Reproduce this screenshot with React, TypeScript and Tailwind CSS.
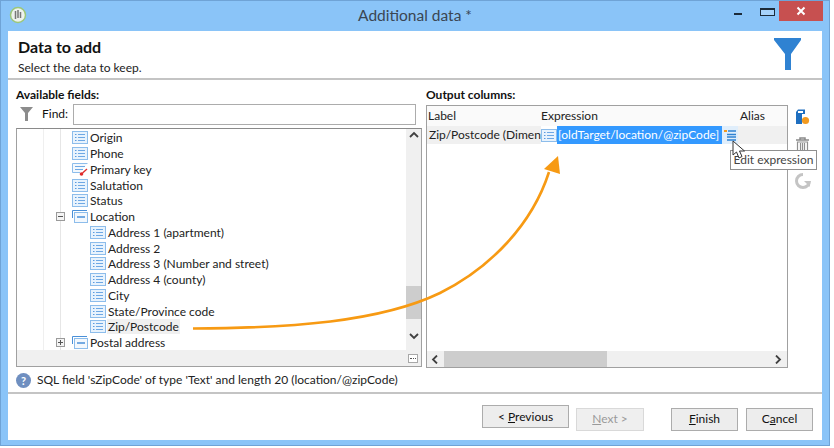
import React from "react";

const font = "[font-family:'Lato','Liberation_Sans',sans-serif]";

function FieldIcon() {
  return (
    <svg width="16" height="13" viewBox="0 0 16 13" className="shrink-0">
      <rect x="0.5" y="0.5" width="15" height="12" fill="#e8f3fd" stroke="#8dbdeb" />
      <path d="M3 3.5h1.5M3 6.5h1.5M3 9.5h1.5" stroke="#5a9be0" strokeWidth="1.2" />
      <path d="M6 3.5h7M6 6.5h7M6 9.5h7" stroke="#6ea8e4" strokeWidth="1.1" />
    </svg>
  );
}

function KeyIcon() {
  return (
    <svg width="16" height="13" viewBox="0 0 16 13" className="shrink-0">
      <path d="M15.5 0.5H0.5V9.5H8" fill="#f3f8fd" stroke="#8dbdeb" />
      <path d="M3 3.5h10M3 6.5h8" stroke="#6ea8e4" strokeWidth="1.1" />
      <circle cx="9.5" cy="11" r="1.8" fill="#e02a2a" />
      <path d="M10.5 10L15 6" stroke="#e02a2a" strokeWidth="1.4" />
    </svg>
  );
}

function GroupIcon() {
  return (
    <svg width="16" height="13" viewBox="0 0 16 13" className="shrink-0">
      <path d="M0.5 8V0.5H15" fill="none" stroke="#4a90d8" />
      <rect x="2.5" y="2.5" width="13" height="10" fill="#f3f8fd" stroke="#8dbdeb" />
      <path d="M5 7h8" stroke="#4a90d8" strokeWidth="1.5" />
    </svg>
  );
}

function Tree({ open }: { open: boolean }) {
  return (
    <span className="flex h-[9px] w-[9px] items-center justify-center border border-[#9a9a9a] bg-[#f4f4f4]">
      <svg width="7" height="7" viewBox="0 0 7 7">
        <path d={open ? "M1 3.5h5" : "M1 3.5h5M3.5 1v5"} stroke="#555" />
      </svg>
    </span>
  );
}

const rows: { label: string; level: number; kind: "field" | "key" | "group"; open?: boolean; sel?: boolean }[] = [
  { label: "Origin", level: 1, kind: "field" },
  { label: "Phone", level: 1, kind: "field" },
  { label: "Primary key", level: 1, kind: "key" },
  { label: "Salutation", level: 1, kind: "field" },
  { label: "Status", level: 1, kind: "field" },
  { label: "Location", level: 1, kind: "group", open: true },
  { label: "Address 1 (apartment)", level: 2, kind: "field" },
  { label: "Address 2", level: 2, kind: "field" },
  { label: "Address 3 (Number and street)", level: 2, kind: "field" },
  { label: "Address 4 (county)", level: 2, kind: "field" },
  { label: "City", level: 2, kind: "field" },
  { label: "State/Province code", level: 2, kind: "field" },
  { label: "Zip/Postcode", level: 2, kind: "field", sel: true },
  { label: "Postal address", level: 1, kind: "group", open: false },
];

function Chevron({ dir }: { dir: "up" | "down" | "left" | "right" }) {
  const d = {
    up: "M1 6l4-4 4 4",
    down: "M1 2l4 4 4-4",
    left: "M6 0.5l-4 4 4 4",
    right: "M2 0.5l4 4-4 4",
  }[dir];
  return (
    <svg width="10" height="9" viewBox="0 0 10 9">
      <path d={d} fill="none" stroke="#404040" strokeWidth="1.8" />
    </svg>
  );
}

function WizardButton({ pre, u, post, disabled, w }: { pre?: string; u: string; post: string; disabled?: boolean; w: string }) {
  return (
    <button
      className={`h-[23px] border text-[12px] ${w} ${
        disabled ? "border-[#d9d9d9] bg-[#efefef] text-[#9a9a9a]" : "border-[#acacac] bg-[#ededed] text-[#111]"
      }`}
    >
      {pre}
      <span className="underline">{u}</span>
      {post}
    </button>
  );
}

export default function App() {
  return (
    <div className={`relative h-[448px] w-[834px] overflow-hidden bg-white ${font}`}>
      <div className="flex h-[446px] w-[830px] flex-col border border-[#6fa3d6] bg-[#8ac4f8] px-[7px] pb-[5px]">
        {/* title bar */}
        <div className="relative flex h-[30px] shrink-0 items-center justify-center">
          <svg width="18" height="18" viewBox="0 0 18 18" className="absolute left-[1px] top-[5px]">
            <circle cx="9" cy="9" r="7.5" fill="#eef2ee" stroke="#9cc77a" strokeWidth="1.5" />
            <path d="M6.5 5v8M9 4v8M11.5 6v6" stroke="#777" strokeWidth="1.5" />
          </svg>
          <span className="text-[15.5px] text-[#3a4652]">Additional data *</span>
          <div className="absolute -right-[1px] top-0 flex items-start">
            <span className="mr-[18px] mt-[12px] h-[2px] w-[8px] bg-[#1c2b3a]" />
            <span className="mr-[4px] mt-[7px] h-[8px] w-[15px] border border-t-2 border-[#1c2b3a] bg-[#a6d2fa]" />
            <span className="flex h-[20px] w-[44px] items-center justify-center bg-[#c75050]">
              <svg width="10" height="10" viewBox="0 0 10 10">
                <path d="M1.5 1.5l7 7M8.5 1.5l-7 7" stroke="#fff" strokeWidth="2" />
              </svg>
            </span>
          </div>
        </div>

        <div className="flex min-h-0 flex-1 flex-col bg-white">
          {/* header */}
          <div className="flex h-[49px] shrink-0 items-start justify-between border-b-2 border-[#c4c4c4] pl-[10px] pr-[20px]">
            <div>
              <div className="mt-[6px] text-[16px] font-bold leading-[20px] text-[#111]">Data to add</div>
              <div className="mt-[3px] text-[12px] leading-[16px] text-[#222]">Select the data to keep.</div>
            </div>
            <svg width="28" height="33" viewBox="0 0 28 33" className="mt-[7px]">
              <path d="M0 0H27V2L17 16V32H11V16L0 2Z" fill="#2f82d2" />
            </svg>
          </div>

          {/* columns */}
          <div className="flex h-[288px] shrink-0 px-[8px]">
            <div className="flex w-[406px] shrink-0 flex-col">
              <div className="mt-[6px] h-[17px] text-[12px] font-bold leading-[17px] text-[#111]">Available fields:</div>
              <div className="flex h-[22px] items-center">
                <svg width="14" height="14" viewBox="0 0 14 14" className="ml-[4px]">
                  <path d="M0 0H13L8 6V14H5V6Z" fill="#8c8c8c" />
                </svg>
                <span className="ml-[8px] w-[27px] text-[12px] text-[#111]">Find:</span>
                <div className="ml-[4px] h-[21px] w-[343px] border border-[#acacac] bg-white" />
              </div>
              <div className="mt-[3px] flex h-[239px] w-[406px] flex-col border border-[#a0a0a0] border-t-[#8a8a8a]">
                <div className="flex min-h-0 flex-1">
                  <div className="relative min-w-0 flex-1 overflow-hidden pt-[1px]">
                    <div className="absolute left-[26px] top-0 h-full w-px bg-[#efefef]" />
                    <div className="absolute left-[43px] top-0 h-full w-px bg-[#e6e6e6]" />
                    {rows.map((r) => (
                      <div
                        key={r.label}
                        className={`relative flex h-[15.75px] items-center ${r.level === 2 ? "pl-[73px]" : "pl-[55px]"}`}
                      >
                        {r.kind === "group" ? (
                          <span className="absolute left-[39px] top-[3px]">
                            <Tree open={!!r.open} />
                          </span>
                        ) : null}
                        {r.kind === "field" ? <FieldIcon /> : r.kind === "key" ? <KeyIcon /> : <GroupIcon />}
                        <span
                          className={`ml-[1px] whitespace-nowrap px-[1px] text-[12px] leading-[15px] text-[#222] ${
                            r.sel ? "bg-[#f0f0f0]" : ""
                          }`}
                        >
                          {r.label}
                        </span>
                      </div>
                    ))}
                  </div>
                  <div className="flex w-[15px] shrink-0 flex-col items-center bg-[#f0f0f0] pt-[2px]">
                    <Chevron dir="up" />
                    <div className="mt-[146px] h-[33px] w-[15px] bg-[#cdcdcd]" />
                    <div className="mt-[13px]">
                      <Chevron dir="down" />
                    </div>
                  </div>
                </div>
                <div className="flex h-[16px] shrink-0 items-center justify-end bg-[#f0f0f0] pr-[3px]">
                  <span className="flex h-[9px] w-[10px] items-center justify-center border border-[#a8a8a8] bg-white">
                    <span className="h-px w-[6px] border-t border-dotted border-[#555]" />
                  </span>
                </div>
              </div>
            </div>

            <div className="ml-[4px] flex w-[362px] shrink-0 flex-col">
              <div className="mt-[6px] h-[17px] text-[12px] font-bold leading-[17px] text-[#111]">Output columns:</div>
              <div className="mt-[2px] flex h-[264px] flex-col border border-[#a0a0a0]">
                <div className="flex h-[20px] shrink-0 items-center bg-[#fafafa] text-[12px] text-[#222]">
                  <span className="w-[114px] pl-[1px]">Label</span>
                  <span className="w-[199px]">Expression</span>
                  <span>Alias</span>
                </div>
                <div className="flex h-[18px] shrink-0 items-center bg-[#f0f0f0] text-[12px]">
                  <span className="w-[114px] whitespace-nowrap pl-[2px] text-[#222]">Zip/Postcode (Dimen</span>
                  <span className="flex h-[18px] w-[16px] shrink-0 items-center bg-white">
                    <FieldIcon />
                  </span>
                  <span className="flex h-[19px] w-[165px] shrink-0 items-center whitespace-nowrap bg-[#3399ff] pl-[1px] text-white">
                    [oldTarget/location/@zipCode]
                  </span>
                  <span className="flex h-[18px] w-[16px] shrink-0 items-center justify-center bg-[#e0eefb]">
                    <svg width="12" height="12" viewBox="0 0 12 12">
                      <path d="M0 2h3" stroke="#f39a1e" strokeWidth="2" />
                      <path d="M4 2h8M3 5.5h9M3 8h9M3 11h9" stroke="#2f82d2" strokeWidth="1.6" />
                    </svg>
                  </span>
                </div>
                <div className="flex-1 bg-white" />
                <div className="flex h-[16px] shrink-0 items-center bg-[#f0f0f0]">
                  <span className="flex w-[17px] justify-center">
                    <Chevron dir="left" />
                  </span>
                  <span className="h-[16px] w-[163px] bg-[#cdcdcd]" />
                  <span className="ml-auto mr-[3px]">
                    <Chevron dir="right" />
                  </span>
                </div>
              </div>
            </div>

            <div className="ml-[7px] flex flex-col items-start pt-[29px]">
              <svg width="15" height="17" viewBox="0 0 15 17">
                <path d="M3 0.5H10V5H7V15H1V3Z" fill="#1f6fc0" />
                <path d="M3 2H8V4H3Z" fill="#fff" />
                <circle cx="10.5" cy="11.5" r="3.6" fill="#f39a1e" />
              </svg>
              <svg width="15" height="16" viewBox="0 0 15 16" className="mt-[11px]">
                <path d="M1 3h13M5 3V1h5v2" fill="none" stroke="#8a8a8a" strokeWidth="1.5" />
                <path d="M2.5 5h10v10h-10zM5.5 6v8M7.5 6v8M9.5 6v8" fill="none" stroke="#8f8f8f" strokeWidth="1.2" />
              </svg>
              <svg width="16" height="16" viewBox="0 0 16 16" className="mt-[20px]">
                <path d="M8 1.5a6.5 6.5 0 1 0 6.5 6.5" fill="none" stroke="#c4c4c4" strokeWidth="3" />
                <path d="M9 8h6v6z" fill="#c4c4c4" />
              </svg>
            </div>
          </div>

          {/* status */}
          <div className="flex h-[26px] shrink-0 items-center border-b-2 border-[#c4c4c4] pl-[8px]">
            <span className="flex h-[15px] w-[15px] items-center justify-center rounded-full bg-[#6f8fc0] text-[11px] font-bold leading-none text-white">
              ?
            </span>
            <span className="ml-[6px] text-[12px] text-[#222]">
              SQL field 'sZipCode' of type 'Text' and length 20 (location/@zipCode)
            </span>
          </div>

          {/* wizard buttons */}
          <div className="flex flex-1 items-start pl-[474px] pt-[11px]">
            <WizardButton pre="< " u="P" post="revious" w="w-[87px]" />
            <span className="ml-[7px]">
              <WizardButton u="N" post="ext >" disabled w="w-[68px]" />
            </span>
            <span className="ml-[27px]">
              <WizardButton u="F" post="inish" w="w-[67px]" />
            </span>
            <span className="ml-[8px]">
              <WizardButton pre="C" u="a" post="ncel" w="w-[67px]" />
            </span>
          </div>
        </div>
      </div>

      {/* annotation arrow */}
      <svg width="834" height="448" viewBox="0 0 834 448" className="pointer-events-none absolute left-0 top-0">
        <path
          d="M193 328.5C290 328 380 322 440 293C490 268 532 225 549 172"
          fill="none"
          stroke="#f79a13"
          strokeWidth="2.6"
        />
        <path d="M558 156L560 174L544 169Z" fill="#f79a13" />
      </svg>

      {/* tooltip */}
      <div className="absolute left-[730px] top-[150px] flex h-[20px] w-[87px] items-center justify-center whitespace-nowrap border border-[#8f8f8f] bg-white text-[12px] text-[#444]">
        Edit expression
      </div>

      {/* mouse cursor */}
      <svg width="14" height="19" viewBox="0 0 14 19" className="absolute left-[732px] top-[140px]">
        <path d="M1 1V15L4.5 12L7 18L10 16.5L7.5 11H12.5Z" fill="#fff" stroke="#333" />
      </svg>
    </div>
  );
}
